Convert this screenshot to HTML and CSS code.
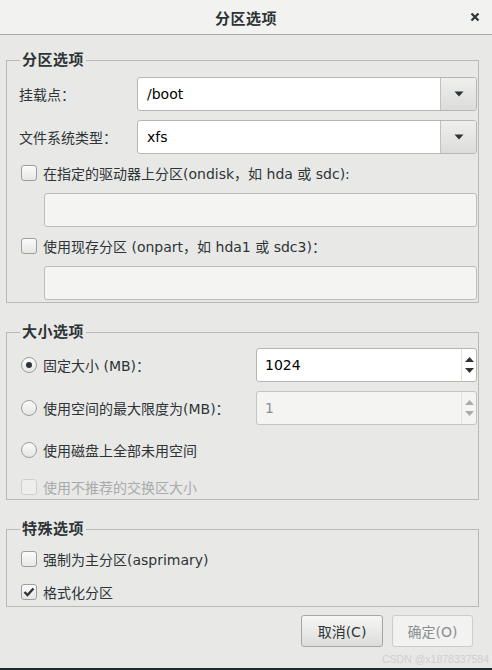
FILE: index.html
```html
<!DOCTYPE html>
<html lang="zh-CN">
<head>
<meta charset="utf-8">
<title>分区选项</title>
<link rel="stylesheet" href="styles.css">
</head>
<body>
<div class="dialog">
  <header class="titlebar">
    <span class="title">分区选项</span>
    <span class="close"><svg width="10" height="10" viewBox="0 0 10 10"><path d="M1.5 1.5 L8.5 8.5 M8.5 1.5 L1.5 8.5" stroke="#2e3436" stroke-width="2.2" fill="none"/></svg></span>
  </header>
  <main class="content">
    <fieldset class="frame f1">
      <legend>分区选项</legend>
      <div class="row combo-row">
        <span class="lbl">挂载点<span class="colon">：</span></span>
        <div class="combo"><span class="combo-text">/boot</span><span class="combo-btn"><svg width="10" height="6" viewBox="0 0 10 6"><path d="M0.5 0.5 H9.5 L5 5.5 Z" fill="#2e3436"/></svg></span></div>
      </div>
      <div class="row combo-row gap9">
        <span class="lbl">文件系统类型<span class="colon">：</span></span>
        <div class="combo"><span class="combo-text">xfs</span><span class="combo-btn"><svg width="10" height="6" viewBox="0 0 10 6"><path d="M0.5 0.5 H9.5 L5 5.5 Z" fill="#2e3436"/></svg></span></div>
      </div>
      <div class="row check-row gap9">
        <span class="check"></span><span class="ctext">在指定的驱动器上分区(ondisk，如 hda 或 sdc):</span>
      </div>
      <div class="entry indent gap10"></div>
      <div class="row check-row gap9">
        <span class="check"></span><span class="ctext">使用现存分区 (onpart，如 hda1 或 sdc3)<span class="colon">：</span></span>
      </div>
      <div class="entry indent gap10"></div>
    </fieldset>

    <fieldset class="frame f2">
      <legend>大小选项</legend>
      <div class="row spin-row">
        <span class="radio on"></span><span class="ctext rlbl">固定大小 (MB)<span class="colon">：</span></span>
        <div class="spin"><span class="spin-text">1024</span><span class="spin-btns"><svg width="9" height="5" viewBox="0 0 9 5"><path d="M0 5 L4.5 0 L9 5 Z" fill="#2e3436"/></svg><svg width="9" height="5" viewBox="0 0 9 5"><path d="M0 0 L9 0 L4.5 5 Z" fill="#2e3436"/></svg></span></div>
      </div>
      <div class="row spin-row gap9">
        <span class="radio"></span><span class="ctext rlbl">使用空间的最大限度为(MB)<span class="colon">：</span></span>
        <div class="spin disabled"><span class="spin-text">1</span><span class="spin-btns"><svg width="9" height="5" viewBox="0 0 9 5"><path d="M0 5 L4.5 0 L9 5 Z" fill="#a9abab"/></svg><svg width="9" height="5" viewBox="0 0 9 5"><path d="M0 0 L9 0 L4.5 5 Z" fill="#a9abab"/></svg></span></div>
      </div>
      <div class="row check-row gap15">
        <span class="radio"></span><span class="ctext">使用磁盘上全部未用空间</span>
      </div>
      <div class="row check-row gap17">
        <span class="check disabled"></span><span class="ctext dim">使用不推荐的交换区大小</span>
      </div>
    </fieldset>

    <fieldset class="frame f3">
      <legend>特殊选项</legend>
      <div class="row check-row">
        <span class="check"></span><span class="ctext">强制为主分区(asprimary)</span>
      </div>
      <div class="row check-row gap13">
        <span class="check on"><svg width="12" height="10" viewBox="0 0 12 10"><path d="M1.5 5 L4.5 8 L10.5 1.5" stroke="#2e3436" stroke-width="2.4" fill="none"/></svg></span><span class="ctext">格式化分区</span>
      </div>
    </fieldset>

    <div class="actions">
      <button class="btn">取消(C)</button>
      <button class="btn btn-disabled">确定(O)</button>
    </div>
    <div class="watermark">CSDN @x1878337584</div>
  </main>
  <div class="strip"></div>
</div>
</body>
</html>
```

FILE: styles.css
```css
* { box-sizing: border-box; }
html, body { margin: 0; padding: 0; }
body {
  width: 492px;
  height: 670px;
  overflow: hidden;
  background: #e8e8e7;
  font-family: "DejaVu Sans", "Noto Sans CJK SC", sans-serif;
  font-size: 14px;
  color: #2e3436;
}
.dialog {
  display: flex;
  flex-direction: column;
  height: 670px;
}
.titlebar {
  height: 35px;
  flex: none;
  background: #f2f2f1;
  border-bottom: 1px solid #a8a8a5;
  display: flex;
  align-items: center;
  justify-content: center;
  position: relative;
}
.title {
  font-weight: bold;
  font-size: 15px;
  letter-spacing: 0.5px;
}
.close {
  position: absolute;
  right: 12px;
  top: 12px;
  width: 10px;
  height: 10px;
  display: flex;
}
.content {
  flex: 1;
  display: flex;
  flex-direction: column;
  padding: 16px 13px 0 6px;
}
.frame {
  margin: 0;
  border: 1px solid #b9b9b6;
  padding: 0 1px 2px 12px;
  min-width: 0;
  display: flex;
  flex-direction: column;
}
.frame legend {
  font-weight: bold;
  font-size: 15px;
  line-height: 18px;
  padding: 0 2px;
  margin-left: 1px;
  letter-spacing: 0.5px;
}
.f1 { padding-top: 8px; }
.f2 { margin-top: 20px; padding-top: 7px; }
.f3 { margin-top: 20px; padding-top: 11px; padding-bottom: 4px; }
.row { display: flex; align-items: center; }
.gap9 { margin-top: 9px; }
.gap10 { margin-top: 10px; }
.gap13 { margin-top: 13px; }
.gap15 { margin-top: 15px; }
.gap17 { margin-top: 17px; }
.combo-row { height: 34px; }
.lbl { width: 118px; flex: none; }
.colon { font-family: "Noto Sans CJK TC", sans-serif; }
.combo {
  flex: 1;
  height: 34px;
  display: flex;
  background: #fff;
  border: 1px solid #b6b6b3;
  border-radius: 3px;
  overflow: hidden;
}
.combo-text {
  flex: 1;
  display: flex;
  align-items: center;
  padding-left: 9px;
  color: #000;
}
.combo-btn {
  width: 36px;
  flex: none;
  display: flex;
  align-items: center;
  justify-content: center;
  border-left: 1px solid #c2c2bf;
  background: linear-gradient(#efefee, #dcdcda);
}
.check-row { height: 20px; }
.check {
  width: 16px;
  height: 16px;
  flex: none;
  margin-left: 2px;
  margin-right: 6px;
  border: 1px solid #9d9d9a;
  border-radius: 3px;
  background: linear-gradient(#fbfbfb, #e6e6e5);
  display: flex;
  align-items: center;
  justify-content: center;
}
.check.disabled {
  border-color: #cfcfcd;
  background: #eeeeed;
}
.radio {
  width: 16px;
  height: 16px;
  flex: none;
  margin-left: 2px;
  margin-right: 6px;
  border: 1px solid #9d9d9a;
  border-radius: 50%;
  background: linear-gradient(#fbfbfb, #e6e6e5);
  display: flex;
  align-items: center;
  justify-content: center;
}
.radio.on::after {
  content: "";
  width: 6px;
  height: 6px;
  border-radius: 50%;
  background: #2e3436;
}
.ctext { white-space: nowrap; }
.dim { color: #a9abab; }
.entry {
  height: 34px;
  background: #f4f4f2;
  border: 1px solid #bdbdba;
  border-radius: 3px;
}
.indent { margin-left: 25px; }
.spin-row { height: 34px; }
.rlbl { width: 213px; flex: none; }
.spin {
  flex: 1;
  height: 34px;
  display: flex;
  background: #fff;
  border: 1px solid #b6b6b3;
  border-radius: 3px;
  overflow: hidden;
}
.spin-text {
  flex: 1;
  display: flex;
  align-items: center;
  padding-left: 8px;
  color: #000;
}
.spin-btns {
  width: 15px;
  flex: none;
  border-left: 1px solid #e2e2e0;
  display: flex;
  flex-direction: column;
  align-items: center;
  justify-content: space-around;
  padding: 5px 0;
}
.spin.disabled { background: #f4f4f2; border-color: #c4c4c1; }
.spin.disabled .spin-text { color: #8b8e8f; }
.actions {
  margin-top: 8px;
  display: flex;
  justify-content: flex-end;
  gap: 9px;
  padding-right: 6px;
}
.btn {
  height: 32px;
  width: 82px;
  font: inherit;
  color: #2e3436;
  border: 1px solid #a6a6a2;
  border-radius: 3px;
  background: linear-gradient(#f6f6f5, #dddddb);
  padding: 0;
}
.btn-disabled {
  width: 81px;
  color: #8b8e8f;
  border-color: #cdcdca;
  background: #f2f2f1;
}
.watermark {
  margin-top: 5px;
  align-self: flex-end;
  margin-right: -10px;
  font-family: "Liberation Sans", sans-serif;
  font-size: 10.5px;
  line-height: 14px;
  color: #cfd0d0;
}
.strip {
  height: 2px;
  flex: none;
  background: #1b2a2c;
}
```
